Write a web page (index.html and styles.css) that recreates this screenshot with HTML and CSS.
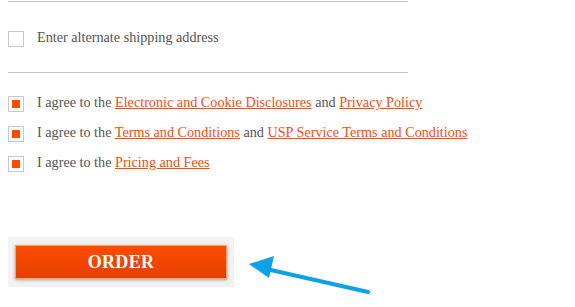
FILE: index.html
```html
<!DOCTYPE html>
<html>
<head>
<meta charset="utf-8">
<link rel="stylesheet" href="styles.css">
</head>
<body>
<div class="page">
  <div class="rule"></div>
  <div class="row alt">
    <span class="box"></span>
    <span class="label">Enter alternate shipping address</span>
  </div>
  <div class="rule rule2"></div>
  <div class="agree">
    <div class="row">
      <span class="box checked"></span>
      <span class="label">I agree to the <a href="#">Electronic and Cookie Disclosures</a> and <a href="#">Privacy Policy</a></span>
    </div>
    <div class="row">
      <span class="box checked"></span>
      <span class="label">I agree to the <a href="#">Terms and Conditions</a> and <a href="#">USP Service Terms and Conditions</a></span>
    </div>
    <div class="row">
      <span class="box checked"></span>
      <span class="label">I agree to the <a href="#">Pricing and Fees</a></span>
    </div>
  </div>
  <div class="order-wrap">
    <button class="order">ORDER</button>
  </div>
  <svg class="arrow" width="140" height="50" viewBox="0 0 140 50">
    <line x1="128" y1="40" x2="22" y2="16" stroke="#0ba2e8" stroke-width="4" stroke-linecap="round"/>
    <polygon points="9,12 34,4 29,26" fill="#0ba2e8"/>
  </svg>
</div>
</body>
</html>
```
FILE: styles.css
```css
html, body { margin: 0; padding: 0; background: #fff; }
body { font-family: "Liberation Serif", "Times New Roman", serif; font-size: 14.2px; color: #555; }
.page { position: relative; width: 575px; height: 307px; padding: 1px 0 0 8px; box-sizing: border-box; }
.rule { width: 400px; height: 1px; background: #c4c4c4; }
.row { display: flex; align-items: center; height: 30px; }
.alt { margin-top: 22px; }
.rule2 { margin-top: 18px; }
.agree { margin-top: 16px; }
.box { width: 14px; height: 14px; border: 1px solid #c8c8c8; box-sizing: content-box; flex: none; display: flex; align-items: center; justify-content: center; background: #fff; }
.box.checked::after { content: ""; width: 8px; height: 8px; background: #ff4a00; }
.label { margin-left: 13px; line-height: 16px; padding-bottom: 4px; }
a { color: #ff4a0a; text-decoration: underline; }
.order-wrap { margin-top: 58px; width: 212px; height: 34px; padding: 8px 7px 8px 7px; background: #f2f2f2; }
.order { display: block; width: 212px; height: 34px; margin: 0; padding: 0; border: 1px solid #f8a66a; background: linear-gradient(#ff4d00, #e33f00); color: #fff; font-family: "Liberation Serif", "Times New Roman", serif; font-weight: bold; font-size: 18px; letter-spacing: 0.3px; box-shadow: 0 1px 3px rgba(0,0,0,0.35); cursor: pointer; }
.arrow { position: absolute; left: 240px; top: 252px; }
```
